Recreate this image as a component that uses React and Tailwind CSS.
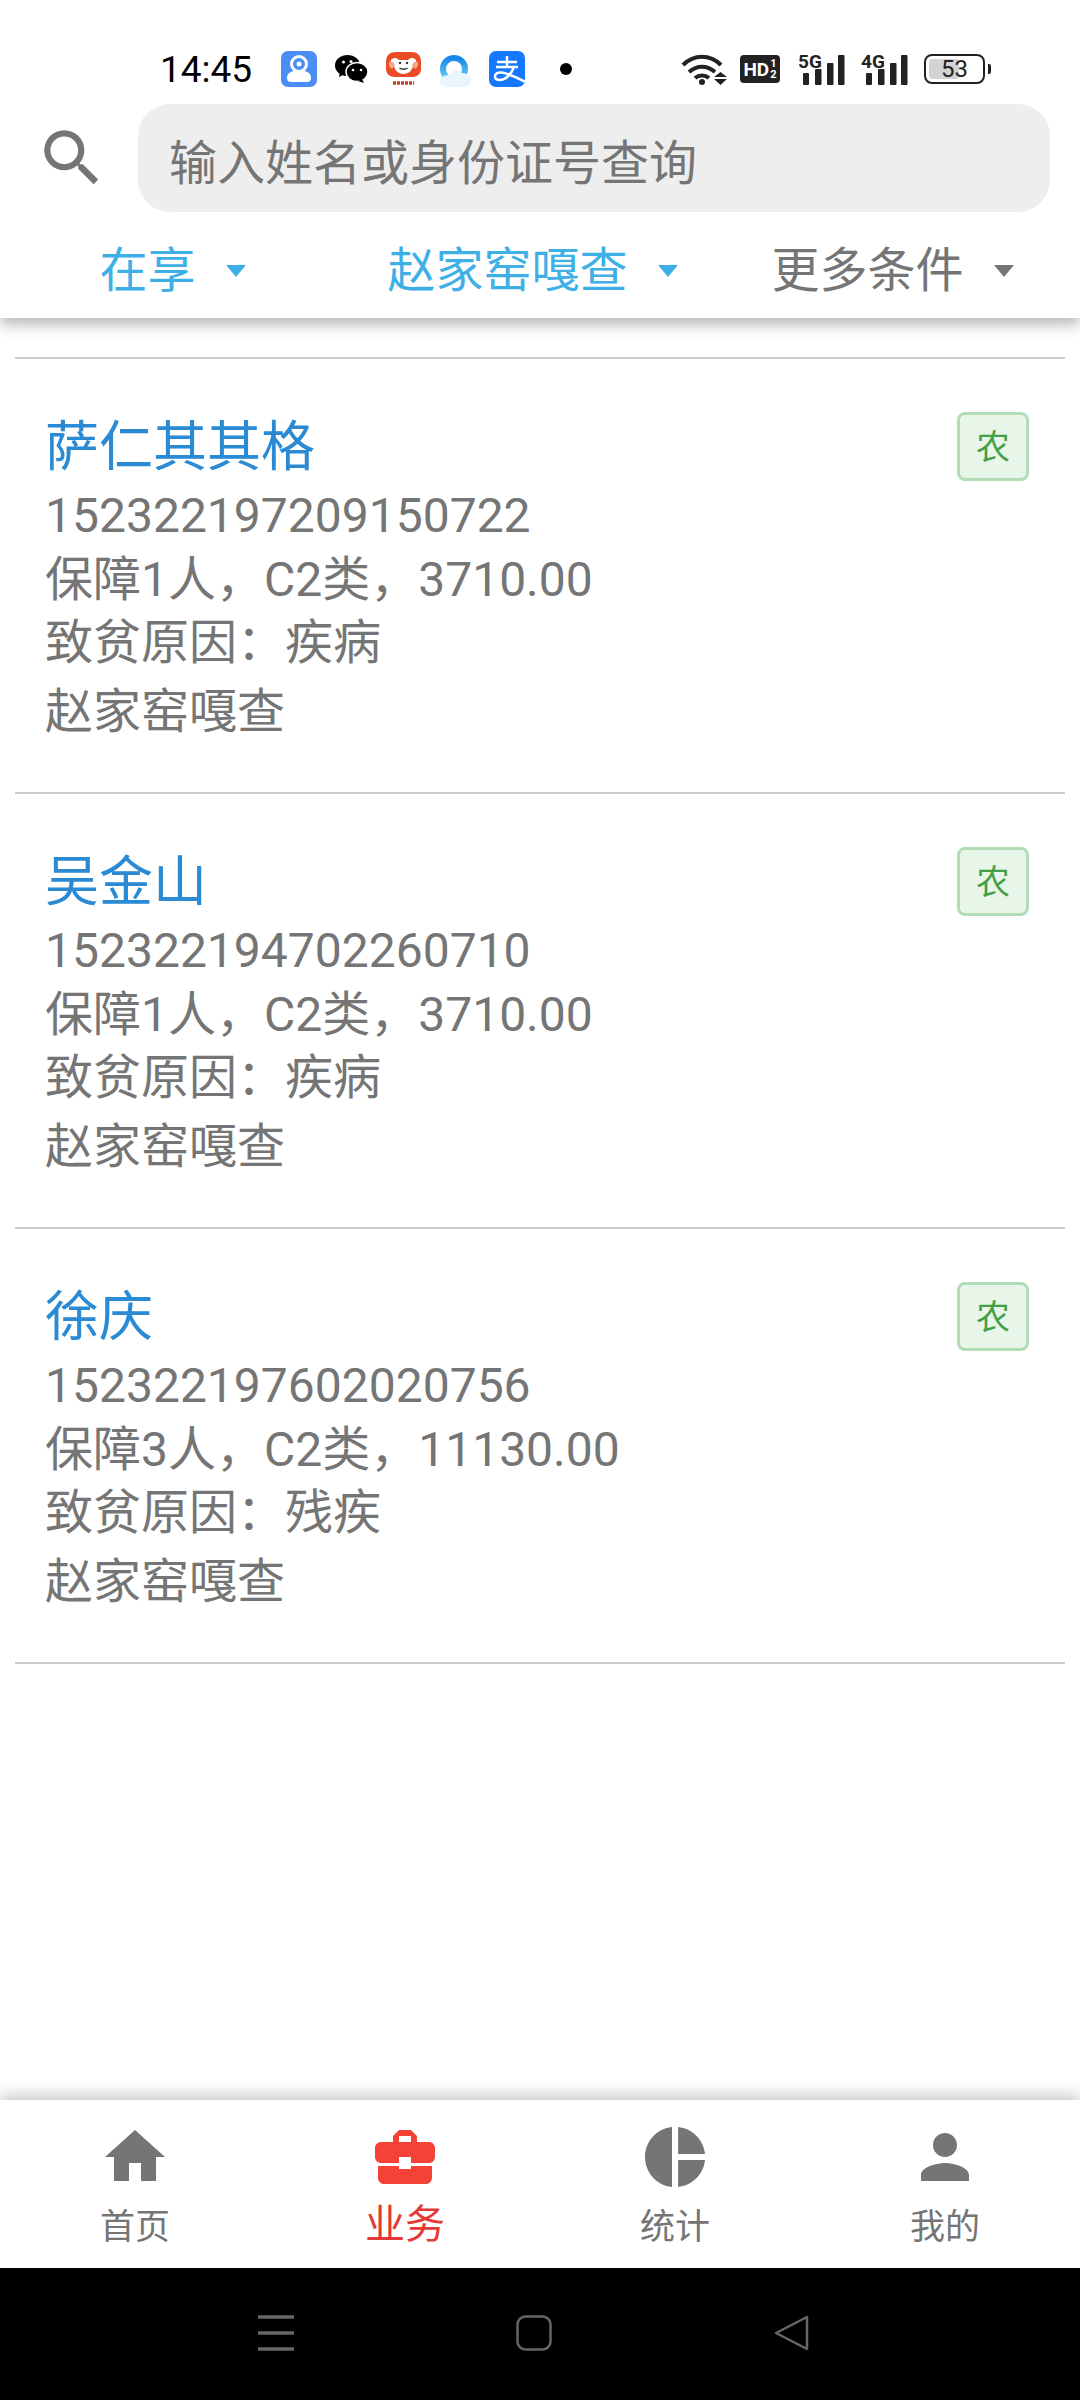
import { MdSearch, MdHome, MdBusinessCenter, MdPieChart, MdPerson } from 'react-icons/md'

const FONT = "font-['Roboto','Noto_Sans_CJK_SC',sans-serif]"

const FILTERS = [
  { label: '在享', active: true },
  { label: '赵家窑嘎查', active: true },
  { label: '更多条件', active: false },
]

const PEOPLE = [
  { name: '萨仁其其格', id: '152322197209150722', info: '保障1人，C2类，3710.00', reason: '致贫原因：疾病' },
  { name: '吴金山', id: '152322194702260710', info: '保障1人，C2类，3710.00', reason: '致贫原因：疾病' },
  { name: '徐庆', id: '152322197602020756', info: '保障3人，C2类，11130.00', reason: '致贫原因：残疾' },
]

const TABS = [
  { label: '首页', Icon: MdHome },
  { label: '业务', Icon: MdBusinessCenter, active: true },
  { label: '统计', Icon: MdPieChart },
  { label: '我的', Icon: MdPerson },
]

function AppIcons() {
  return (
    <div className="flex items-center">
      {/* camera app */}
      <svg viewBox="0 0 36 36" className="ml-[29px] w-[36px] h-[36px]">
        <rect width="36" height="36" rx="7" fill="#4a8ef5" />
        <circle cx="18" cy="13" r="7.5" fill="none" stroke="#fff" strokeWidth="3" />
        <circle cx="18" cy="13" r="2.5" fill="#fff" />
        <path d="M6 27c0-5 4-7 8-7h8c4 0 8 2 8 7 0 3-2 4-4 4H10c-2 0-4-1-4-4z" fill="#fff" />
      </svg>
      {/* wechat */}
      <svg viewBox="0 0 33 28" className="ml-[18px] w-[33px] h-[28px]">
        <ellipse cx="12.500" cy="10.500" rx="12.500" ry="10.500" fill="#000" />
        <path d="M5 17l-1 5 6-3z" fill="#000" />
        <ellipse cx="22" cy="17" rx="11" ry="9.500" fill="#000" stroke="#fff" strokeWidth="1.500" />
        <path d="M27 24l2 4-6-2z" fill="#000" />
        <circle cx="8.500" cy="7" r="1.500" fill="#fff" />
        <circle cx="16" cy="6.500" r="1.500" fill="#fff" />
        <circle cx="18" cy="15" r="1.300" fill="#fff" />
        <circle cx="26" cy="15" r="1.300" fill="#fff" />
      </svg>
      {/* red dog app */}
      <svg viewBox="0 0 37 34" className="ml-[17px] w-[37px] h-[34px]">
        <path d="M1 10C1 3 5 0 11 0h15c6 0 10 3 10 10v7c0 5-4 8-9 8H10c-5 0-9-3-9-8z" fill="#ea4a24" />
        <path d="M6 8c3-3 6-2 8 0h9c2-2 5-3 8 0 1 3-1 6-3 6-1 5-5 8-9.500 8S10 19 9 14c-2 0-4-3-3-6z" fill="#fff" />
        <path d="M4 10c3-1 5 0 6 3l-3 4c-2-1-4-4-3-7zM33 10c-3-1-5 0-6 3l3 4c2-1 4-4 3-7z" fill="#f4a58e" />
        <circle cx="15" cy="11" r="1.200" fill="#333" />
        <circle cx="22" cy="11" r="1.200" fill="#333" />
        <path d="M14.500 16c2 1.500 6 1.500 8 0" fill="none" stroke="#333" strokeWidth="1.500" />
        <path d="M8 31h21" stroke="#c8402a" strokeWidth="3.500" strokeDasharray="3 1" />
      </svg>
      {/* browser */}
      <svg viewBox="0 0 33 32" className="ml-[17px] w-[33px] h-[32px] mt-[4px]">
        <defs>
          <linearGradient id="qb" x1="0" y1="0" x2="0" y2="1">
            <stop offset="0" stopColor="#1787e8" />
            <stop offset="1" stopColor="#6fd0f5" />
          </linearGradient>
        </defs>
        <circle cx="15" cy="14" r="11" fill="none" stroke="url(#qb)" strokeWidth="6" />
        <path d="M1 26c0-3 3-6 9-6 3-5 10-6 13-2 6 0 9 4 9 7 0 4-3 7-8 7H9c-5 0-8-3-8-6z" fill="#e9f4fb" />
      </svg>
      {/* alipay */}
      <svg viewBox="0 0 36 36" className="ml-[17px] w-[36px] h-[36px]">
        <rect width="36" height="36" rx="7" fill="#1677ff" />
        <path d="M8 11h20M18 5v10M7 16h22" fill="none" stroke="#fff" strokeWidth="2.500" />
        <path d="M25 16c-3 8-9 13-14 13-3 0-5-1.500-5-3.500 0-3 3-4.500 7-4 5 .5 12 4 23 9" fill="none" stroke="#fff" strokeWidth="2.500" />
      </svg>
      <div className="ml-[35px] w-[12px] h-[12px] rounded-full bg-black" />
    </div>
  )
}

function SignalBars({ label }) {
  return (
    <div className="relative w-[47px] h-[31px]">
      <span className="absolute left-0 -top-[2px] text-[19px] leading-none font-bold text-[#222]">{label}</span>
      <svg viewBox="0 0 47 31" className="w-[47px] h-[31px]">
        <rect x="5" y="19" width="6" height="12" rx="1" fill="#222" />
        <rect x="17" y="15" width="6.500" height="16" rx="1" fill="#222" />
        <rect x="29" y="9" width="6.500" height="22" rx="1" fill="#222" />
        <rect x="40" y="1" width="6.500" height="30" rx="1" fill="#222" />
      </svg>
    </div>
  )
}

function StatusIcons() {
  return (
    <div className="ml-auto mr-[89px] flex items-center">
      <svg viewBox="0 0 46 31" className="w-[46px] h-[31px]" fill="none" stroke="#222" strokeWidth="4">
        <path d="M2 11C13 0 29 0 40 11" />
        <path d="M8 18c8-7 18-7 26 0" />
        <path d="M14 24c4-3.500 10-3.500 14 0" />
        <circle cx="21" cy="28" r="3" fill="#222" stroke="none" />
        <path d="M33 23l6.500-5 6.500 5zM33 25l6.500 6 6.500-6z" fill="#222" stroke="none" />
      </svg>
      <div className="ml-[13px] w-[40px] h-[28px] rounded-[4px] bg-[#222] flex items-center justify-center text-white text-[19px] font-bold leading-none">
        HD
        <span className="flex flex-col items-center text-[11px] leading-[11px] ml-[1px]">
          <span>1</span>
          <span>2</span>
        </span>
      </div>
      <div className="ml-[18px]"><SignalBars label="5G" /></div>
      <div className="ml-[16px]"><SignalBars label="4G" /></div>
      <div className="ml-[16px] flex items-center">
        <div className="relative w-[61px] h-[30px] rounded-[8px] border-2 border-[#222] overflow-hidden flex items-center justify-center text-[24px] text-[#222] leading-none">
          <div className="absolute left-[3px] top-[3px] bottom-[3px] w-[30px] rounded-[3px] bg-[#d3d3d3]" />
          <span className="relative">53</span>
        </div>
        <div className="ml-[3px] w-[3px] h-[10px] rounded-r-[2px] bg-[#222]" />
      </div>
    </div>
  )
}

function PersonRow({ person }) {
  return (
    <div className="relative h-[435px] border-b-2 border-[#cccccc] pl-[30px] pt-[54px]">
      <div className="absolute right-[36px] top-[53px] w-[72px] h-[69px] rounded-[8px] border-[3px] border-[#b2dcb5] bg-[#e8f5e9] flex items-center justify-center text-[34px] leading-none text-[#43a047]">农</div>
      <div className="text-[54px] leading-[70px] text-[#2a8ad4]">{person.name}</div>
      <div className="text-[48px] leading-[62px] mt-[2px] text-[#757575]">{person.id}</div>
      <div className="text-[48px] leading-[66px] text-[#757575]">{person.info}</div>
      <div className="text-[48px] leading-[66px] -mt-[3px] text-[#757575]">{person.reason}</div>
      <div className="text-[48px] leading-[66px] mt-[3px] text-[#757575]">赵家窑嘎查</div>
    </div>
  )
}

export default function App() {
  return (
    <div className={`${FONT} w-[1080px] h-[2400px] flex flex-col bg-white overflow-hidden`}>
      {/* --- Header --- */}
      <header className="relative z-10 h-[318px] bg-white shadow-[0_6px_14px_rgba(0,0,0,0.3)]">
        <div className="h-[104px] flex items-center pl-[160px] pt-[34px]">
          <span className="text-[37px] leading-none text-black">14:45</span>
          <AppIcons />
          <StatusIcons />
        </div>
        <div className="flex items-center h-[108px] pl-[35px]">
          <MdSearch size={74} color="#757575" />
          <input
            readOnly
            placeholder="输入姓名或身份证号查询"
            className="ml-[29px] w-[912px] h-[108px] rounded-[32px] bg-[#eeeeee] pl-[31px] pt-[10px] text-[48px] outline-none placeholder:text-[#757575]"
          />
        </div>
        <div className="grid grid-cols-3 mt-[27px]">
          {FILTERS.map((f) => (
            <div key={f.label} className={`flex items-center justify-center pr-[15px] text-[48px] leading-[64px] ${f.active ? 'text-[#3fb0e6]' : 'text-[#757575]'}`}>
              {f.label}
              <span className={`ml-[30px] w-0 h-0 border-x-[10px] border-x-transparent border-t-[12px] ${f.active ? 'border-t-[#3fb0e6]' : 'border-t-[#757575]'}`} />
            </div>
          ))}
        </div>
      </header>

      {/* --- List --- */}
      <main className="flex-1 px-[15px] pt-[39px]">
        <div className="border-t-2 border-[#cccccc]">
          {PEOPLE.map((p) => <PersonRow key={p.id} person={p} />)}
        </div>
      </main>

      {/* --- Tab bar --- */}
      <nav className="relative h-[168px] grid grid-cols-4 bg-white shadow-[0_-6px_14px_rgba(0,0,0,0.2)]">
        {TABS.map(({ label, Icon, active }) => (
          <div key={label} className="flex flex-col items-center pt-[21px]">
            <Icon size={72} color={active ? '#f44336' : '#757575'} />
            {active
              ? <span className="text-[40px] leading-[48px] mt-[8px] text-[#e53935]">{label}</span>
              : <span className="text-[35px] leading-[46px] mt-[12px] text-[#757575]">{label}</span>}
          </div>
        ))}
      </nav>

      {/* --- System nav --- */}
      <div className="h-[132px] bg-black flex items-center pl-[258px] pb-[2px]">
        <svg viewBox="0 0 36 36" className="w-[36px] h-[36px]" stroke="#666" strokeWidth="3.500">
          <path d="M0 2h36M0 18h36M0 34h36" />
        </svg>
        <svg viewBox="0 0 36 36" className="ml-[222px] w-[36px] h-[36px]" fill="none" stroke="#666" strokeWidth="2.500">
          <rect x="1.500" y="1.500" width="33" height="33" rx="8" />
        </svg>
        <svg viewBox="0 0 36 36" className="ml-[222px] w-[36px] h-[36px]" fill="none" stroke="#666" strokeWidth="2.500" strokeLinejoin="round">
          <path d="M33 2L2 18l31 16z" />
        </svg>
      </div>
    </div>
  )
}
